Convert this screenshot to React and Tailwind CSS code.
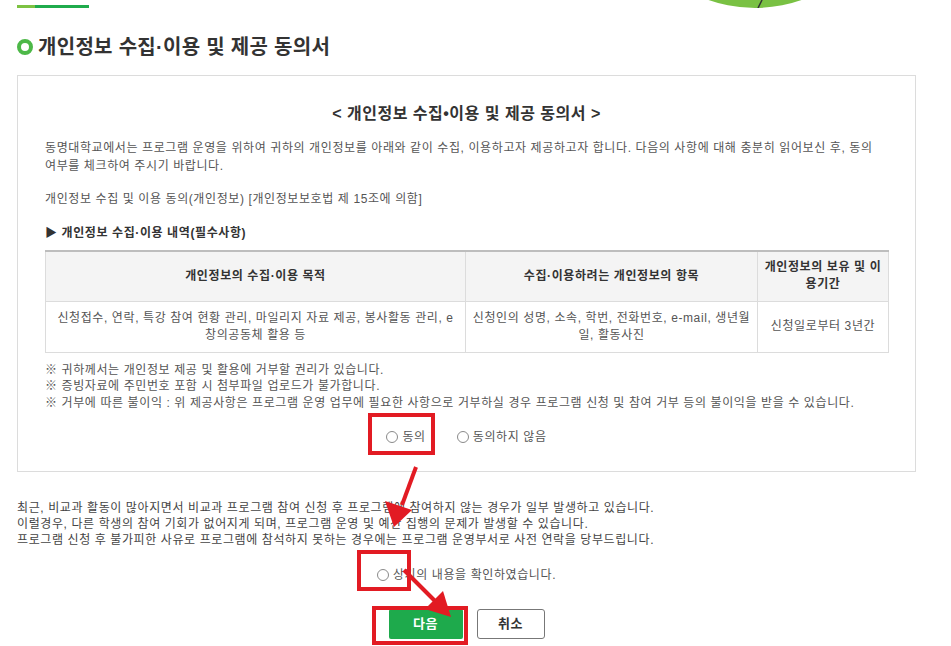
import React from 'react';

const Radio = ({ label }) => {
  return (
    <label className="flex items-center gap-[4px]">
      <span className="w-[12px] h-[12px] rounded-full border border-[#8a8a8a] bg-white"></span>
      <span>{label}</span>
    </label>
  );
};

const Annotations = () => {
  return (
    <svg className="absolute left-0 top-0 pointer-events-none" width="951" height="646" viewBox="0 0 951 646">
      <g fill="none" stroke="#e21b23" strokeWidth="4">
        <rect x="370" y="415" width="63" height="38" />
        <rect x="359" y="552" width="50" height="37" />
        <rect x="374" y="608" width="92" height="35" />
      </g>
      <g stroke="#e21b23" strokeWidth="4" strokeLinecap="butt">
        <line x1="416" y1="467" x2="402" y2="505" />
        <line x1="404" y1="570" x2="436" y2="602" />
      </g>
      <g fill="#e21b23">
        <polygon points="394,527 385,501 412,510" />
        <polygon points="451,617 425,609 443,591" />
      </g>
    </svg>
  );
};

const App = () => {
  return (
    <div className="relative w-[951px] h-[646px] overflow-hidden bg-white pl-[17px] pr-[35px] font-['Liberation_Sans','Noto_Sans_CJK_KR',sans-serif] text-[#555] tracking-[0.6px]">
      {/* top strip */}
      <div className="flex items-start h-[8px]">
        <div className="flex mt-[5px] h-[3px]">
          <div className="w-[18px] bg-[#7dc242]"></div>
          <div className="w-[54px] bg-[#1fab4c]"></div>
        </div>
        <svg className="ml-auto mr-[111px]" width="100" height="8" viewBox="0 0 100 8">
          <circle cx="50" cy="-131" r="139" fill="#79c143" />
          <line x1="57" y1="0" x2="53" y2="8" stroke="#333" strokeWidth="1.5" />
        </svg>
      </div>

      {/* title */}
      <div className="flex items-center gap-[5px] mt-[26px] h-[26px]">
        <span className="w-[16px] h-[16px] rounded-full border-[4px] border-[#4db848]"></span>
        <h2 className="text-[20px] font-bold text-[#333] tracking-[0.3px] leading-[26px]">개인정보 수집·이용 및 제공 동의서</h2>
      </div>

      {/* agreement box */}
      <div className="mt-[15px] border border-[#dcdcdc] pt-[27px] pb-[25px] pl-[27px] pr-[27px] text-[12px]">
        <h3 className="text-center text-[16px] font-bold text-[#333] leading-[22px] tracking-[0.5px]">&lt; 개인정보 수집•이용 및 제공 동의서 &gt;</h3>
        <p className="mt-[14px] leading-[18px] whitespace-nowrap">
          동명대학교에서는 프로그램 운영을 위하여 귀하의 개인정보를 아래와 같이 수집, 이용하고자 제공하고자 합니다. 다음의 사항에 대해 충분히 읽어보신 후, 동의<br />
          여부를 체크하여 주시기 바랍니다.
        </p>
        <p className="mt-[15px] leading-[18px]">개인정보 수집 및 이용 동의(개인정보) [개인정보보호법 제 15조에 의함]</p>
        <p className="mt-[16px] leading-[18px] font-bold text-[#333]">▶ 개인정보 수집·이용 내역(필수사항)</p>

        <table className="mt-[8px] w-[843px] table-fixed border-collapse border-t-2 border-t-[#bdbdbd] text-center">
          <colgroup>
            <col className="w-[420px]" />
            <col className="w-[292px]" />
            <col className="w-[131px]" />
          </colgroup>
          <thead>
            <tr className="h-[50px] bg-[#f4f4f4] text-[#333] font-bold leading-[17px]">
              <th className="border border-[#dcdcdc] border-t-0">개인정보의 수집·이용 목적</th>
              <th className="border border-[#dcdcdc] border-t-0">수집·이용하려는 개인정보의 항목</th>
              <th className="border border-[#dcdcdc] border-t-0 whitespace-nowrap">개인정보의 보유 및 이<br />용기간</th>
            </tr>
          </thead>
          <tbody>
            <tr className="h-[51px] leading-[17px]">
              <td className="border border-[#dcdcdc] whitespace-nowrap">신청접수, 연락, 특강 참여 현황 관리, 마일리지 자료 제공, 봉사활동 관리, e<br />창의공동체 활용 등</td>
              <td className="border border-[#dcdcdc] whitespace-nowrap">신청인의 성명, 소속, 학번, 전화번호, e-mail, 생년월<br />일, 활동사진</td>
              <td className="border border-[#dcdcdc]">신청일로부터 3년간</td>
            </tr>
          </tbody>
        </table>

        <div className="mt-[9px] leading-[16.5px] whitespace-nowrap">
          <p>※ 귀하께서는 개인정보 제공 및 활용에 거부할 권리가 있습니다.</p>
          <p>※ 증빙자료에 주민번호 포함 시 첨부파일 업로드가 불가합니다.</p>
          <p>※ 거부에 따른 불이익 : 위 제공사항은 프로그램 운영 업무에 필요한 사항으로 거부하실 경우 프로그램 신청 및 참여 거부 등의 불이익을 받을 수 있습니다.</p>
        </div>

        <div className="mt-[17px] flex justify-center gap-[31px] leading-[18px]">
          <Radio label="동의" />
          <Radio label="동의하지 않음" />
        </div>
      </div>

      {/* notice */}
      <div className="mt-[28px] text-[12px] leading-[16px] text-[#444] whitespace-nowrap">
        <p>최근, 비교과 활동이 많아지면서 비교과 프로그램 참여 신청 후 프로그램에 참여하지 않는 경우가 일부 발생하고 있습니다.</p>
        <p>이럴경우, 다른 학생의 참여 기회가 없어지게 되며, 프로그램 운영 및 예산 집행의 문제가 발생할 수 있습니다.</p>
        <p>프로그램 신청 후 불가피한 사유로 프로그램에 참석하지 못하는 경우에는 프로그램 운영부서로 사전 연락을 당부드립니다.</p>
      </div>

      <div className="mt-[18px] flex justify-center text-[12px] leading-[18px] text-[#555]">
        <Radio label="상기의 내용을 확인하였습니다." />
      </div>

      <div className="mt-[25px] flex justify-center gap-[14px]">
        <button className="w-[74px] h-[30px] rounded-[2px] bg-[#1eaa4c] text-white text-[13px] font-bold">다음</button>
        <button className="w-[68px] h-[30px] rounded-[3px] border border-[#777] bg-white text-[#333] text-[13px] font-bold">취소</button>
      </div>

      <Annotations />
    </div>
  );
};

export default App;
